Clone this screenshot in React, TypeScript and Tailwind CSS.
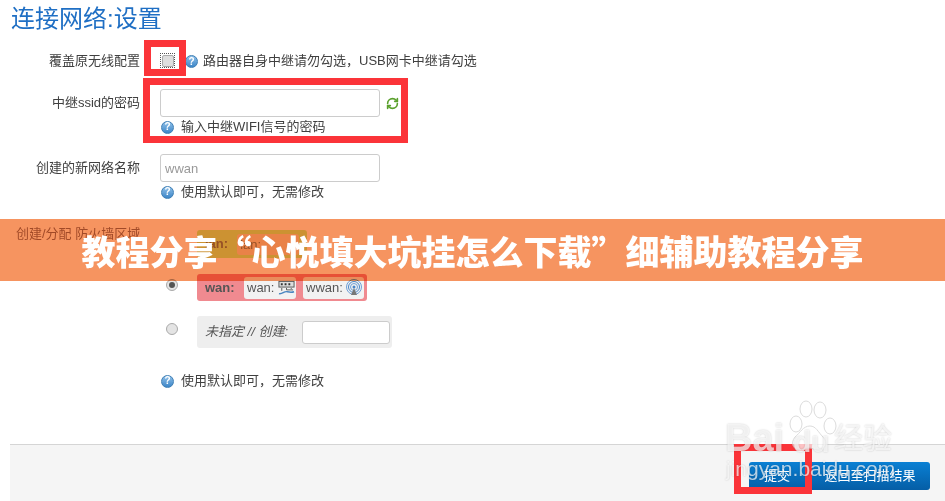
import { RefreshCw } from 'lucide-react'

const HelpIcon = () => (
  <span className="flex h-[13px] w-[13px] shrink-0 items-center justify-center rounded-full border border-[#3f7fb5] bg-gradient-to-b from-[#8fc0e8] to-[#3b86c8] text-[10px] leading-none font-bold text-white">
    ?
  </span>
)

const Hint = ({ text }: { text: string }) => (
  <div className="flex h-[18px] items-center gap-[7px] pl-px">
    <HelpIcon />
    <span>{text}</span>
  </div>
)

const Label = ({ text, className }: { text: string; className?: string }) => (
  <div className={`w-[140px] shrink-0 text-right ${className ?? ''}`}>{text}</div>
)

const Radio = ({ checked, className }: { checked?: boolean; className?: string }) => (
  <span className={`flex h-3 w-3 items-center justify-center rounded-full border border-[#aaaaaa] bg-[#e4e4e4] ${className ?? ''}`}>
    {checked && <span className="h-1.5 w-1.5 rounded-full bg-[#555555]" />}
  </span>
)

const LanIcon = () => (
  <svg width="17" height="16" viewBox="0 0 18 16" fill="none">
    <rect x="1" y="1" width="16" height="6" fill="#dddddd" stroke="#555555" />
    <path d="M3 3h2v2H3zM7 3h2v2H7zM11 3h2v2h-2z" fill="#333333" />
    <path d="M4 8v3M9 8v2h7M14 8v1" stroke="#555555" />
    <path d="M1 14c4 1 5-3 9-2s4 1 7 0" stroke="#4a86c0" strokeWidth="1.5" />
  </svg>
)

const WifiIcon = () => (
  <svg width="18" height="18" viewBox="0 0 18 18" fill="none">
    <circle cx="9" cy="8" r="7.5" stroke="#6fa0d8" />
    <circle cx="9" cy="8" r="5.5" stroke="#4a86c8" />
    <circle cx="9" cy="8" r="3.5" stroke="#6fa0d8" />
    <circle cx="9" cy="8" r="1.5" fill="#4a86c8" />
    <path d="M9 9l-3 7h6z" fill="#777777" />
  </svg>
)

const Zone = ({ name, icon, className }: { name: string; icon: React.ReactNode; className: string }) => (
  <span className={`flex h-[22px] items-center justify-between rounded-[3px] bg-[#f2f2f2] pr-[1px] pl-[3px] text-[#555555] ${className}`}>
    {name}:{icon}
  </span>
)

const RedBox = ({ className }: { className: string }) => (
  <div className={`absolute border-[7px] border-[#fb3439] ${className}`} />
)

export default function App() {
  return (
    <div className="relative flex h-[501px] w-[945px] flex-col overflow-hidden bg-white font-['Liberation_Sans','Noto_Sans_CJK_SC',sans-serif] text-[13px] text-[#404040]">
      <h1 className="ml-[11px] h-[38px] pt-[3px] text-[24px] leading-[32px] font-normal text-[#1f6fc4]">连接网络:设置</h1>

      <div className="mt-[13px] flex h-[19px] items-center gap-5">
        <Label text="覆盖原无线配置" />
        <span className="flex h-[15px] w-[15px] items-center justify-center border border-dotted border-[#555555]">
          <span className="h-3 w-3 rounded-[2px] border border-[#aaaaaa] bg-[#dedede]" />
        </span>
        <div className="-ml-[10px] flex items-center gap-[5px] pt-[2px]">
          <HelpIcon />
          <span className="-mt-[2px]">路由器自身中继请勿勾选，USB网卡中继请勾选</span>
        </div>
      </div>

      <div className="mt-[19px] flex gap-5">
        <Label text="中继ssid的密码" className="leading-[28px]" />
        <div>
          <div className="flex items-center gap-[6px]">
            <input readOnly className="h-[28px] w-[220px] rounded-[3px] border border-[#cccccc] bg-white" />
            <RefreshCw size={13} strokeWidth={3} className="text-[#5aa02c]" />
          </div>
          <div className="mt-[1px]">
            <Hint text="输入中继WIFI信号的密码" />
          </div>
        </div>
      </div>

      <div className="mt-[18px] flex gap-5">
        <Label text="创建的新网络名称" className="leading-[28px]" />
        <div>
          <input readOnly value="wwan" className="h-[28px] w-[220px] rounded-[3px] border border-[#cccccc] bg-white px-[4px] text-[#999999]" />
          <div className="mt-[1px]">
            <Hint text="使用默认即可，无需修改" />
          </div>
        </div>
      </div>

      <div className="mt-[29px] flex">
        <div className="-mt-[5px] h-[18px] w-[140px] shrink-0 pl-[16px] leading-[18px] whitespace-nowrap text-[#a87f68]">创建/分配 防火墙区域</div>
        <div className="flex flex-col pl-[26px]">
          <div className="flex items-center gap-[19px]">
            <span className="h-3 w-3" />
            <div className="flex h-[28px] w-[110px] items-center gap-[9px] rounded-[3px] bg-[#d4fc85] px-2 font-bold text-[#9c8a60]">
              lan:
              <span className="h-[21px] w-[62px] rounded-[3px] bg-[#f2e0c0] px-[3px] leading-[21px] font-normal">lan:</span>
            </div>
          </div>
          <div className="mt-[16px] flex items-center gap-[19px]">
            <Radio checked className="-mt-[5px]" />
            <div className="flex h-[27px] w-[170px] items-center rounded-[3px] bg-[#f08a90] pr-[3px] pl-2">
              <span className="w-[39px] font-bold text-[#555555]">wan:</span>
              <Zone name="wan" icon={<LanIcon />} className="mr-[7px] w-[52px]" />
              <Zone name="wwan" icon={<WifiIcon />} className="w-[61px]" />
            </div>
          </div>
          <div className="mt-[15px] flex items-center gap-[19px]">
            <Radio className="-mt-[7px]" />
            <div className="flex h-[32px] w-[195px] items-center gap-[14px] rounded-[3px] bg-[#eeeeee] px-2 whitespace-nowrap text-[#555555] italic">
              未指定 // 创建:
              <input readOnly className="h-[23px] w-[88px] rounded-[3px] border border-[#cccccc] bg-white" />
            </div>
          </div>
        </div>
      </div>

      <div className="mt-[24px] pl-[160px]">
        <Hint text="使用默认即可，无需修改" />
      </div>

      <div className="mt-auto ml-[10px] flex h-[57px] items-start justify-end gap-px border-t border-[#d5d5d5] bg-[#f5f5f5] pt-[17px] pr-[15px]">
        <button className="h-[28px] w-[56px] rounded-l-[3px] bg-gradient-to-b from-[#0a80d4] to-[#055ea6] text-white">提交</button>
        <button className="h-[28px] w-[124px] rounded-r-[3px] bg-gradient-to-b from-[#0a80d4] to-[#055ea6] pl-[4px] text-white">返回至扫描结果</button>
      </div>

      <RedBox className="top-[40px] left-[144px] h-[36px] w-[42px]" />
      <RedBox className="top-[78px] left-[143px] h-[65px] w-[265px]" />
      <RedBox className="top-[444px] left-[734px] h-[50px] w-[78px]" />

      <div className="absolute top-[219px] left-0 h-[62px] w-full bg-[#f69460] mix-blend-multiply" />
      <div className="absolute top-[219px] left-0 flex h-[62px] w-full items-center justify-center font-['Noto_Sans_CJK_SC',sans-serif] text-[34px] font-black text-white">
        教程分享“心悦填大坑挂怎么下载”细辅助教程分享
      </div>

      <div className="absolute top-[419px] left-[725px] text-[38px] leading-[38px] font-bold text-white/70 [text-shadow:0_0_2px_rgba(0,0,0,0.2)]">Bai</div>
      <svg className="absolute top-[398px] left-[782px] opacity-70" width="56" height="60" viewBox="0 0 56 60" fill="white" stroke="#cccccc">
        <ellipse cx="14" cy="26" rx="6" ry="8" />
        <ellipse cx="24" cy="11" rx="6" ry="8" />
        <ellipse cx="38" cy="12" rx="6" ry="8" />
        <ellipse cx="48" cy="28" rx="6" ry="8" />
        <path d="M28 28c6 0 8 6 13 11 6 6 2 13-5 13-4 0-6-2-9-2s-6 2-9 2c-7 0-10-7-5-13 5-4 8-11 15-11z" />
      </svg>
      <div className="absolute top-[427px] left-[793px] text-[30px] leading-[30px] font-bold text-white/70 [text-shadow:0_0_2px_rgba(0,0,0,0.2)]">du</div>
      <div className="absolute top-[423px] left-[834px] text-[29px] leading-[32px] text-white/70 [text-shadow:0_0_2px_rgba(0,0,0,0.2)]">经验</div>
      <div className="absolute top-[457px] left-[726px] text-[21px] leading-[24px] text-white/70 [text-shadow:0_0_2px_rgba(0,0,0,0.2)]">jingyan.baidu.com</div>
    </div>
  )
}
